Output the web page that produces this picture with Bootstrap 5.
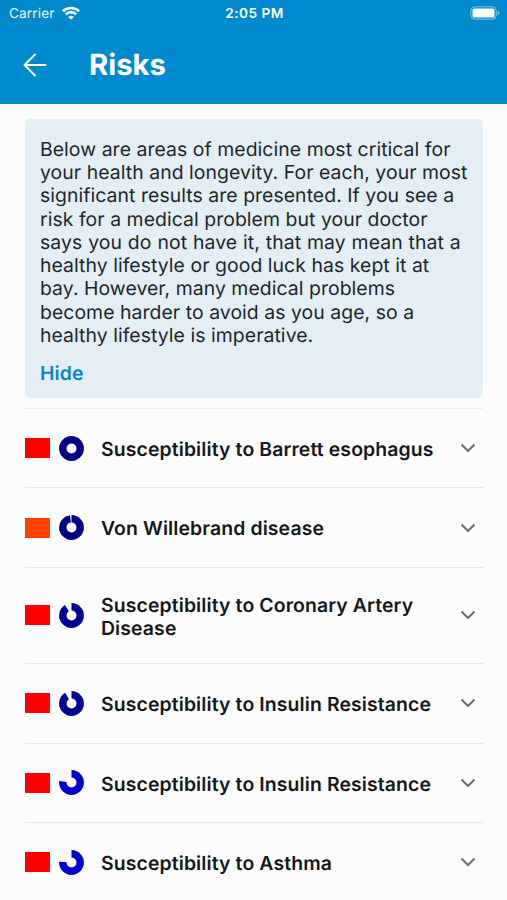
<!DOCTYPE html>
<html lang="en">
<head>
<meta charset="utf-8">
<meta name="viewport" content="width=device-width, initial-scale=1">
<title>Risks</title>
<link href="https://cdn.jsdelivr.net/npm/bootstrap@5.3.0/dist/css/bootstrap.min.css" rel="stylesheet">
<style>
body{background:#fbfbfb;color:#20272c;font-family:Inter,"Liberation Sans",sans-serif;height:900px;overflow:hidden;text-rendering:geometricPrecision}
.app-header{background:#008ace;height:103.5px}
.status{height:27px;font-size:13.6px;line-height:27px;padding:1px 7px 0 9px}
.status>*{flex:1 1 0}
.clock{font-weight:600;letter-spacing:.5px}
.carrier{letter-spacing:.15px;opacity:.93;padding-top:1px}
.status svg{margin-bottom:1.5px}
.title-row{height:76px;padding-left:23px}
.screen-title{font-size:29.3px;font-weight:700;line-height:36px;margin:0 0 0 42px;padding-top:2px}
.page{padding:15px 24.5px 0 25px}
.intro{background:#e3eef5;border-radius:5px;height:279.5px;padding:19.3px 15px 0;font-size:19.4px;letter-spacing:.06px;line-height:23.25px;white-space:nowrap}
.wide-line{word-spacing:.42px}
.hide-link{color:#0a86c8;font-weight:600;letter-spacing:.15px;margin-top:14.7px;display:block;text-decoration:none}
.risks{margin-top:10px;border-top:1px solid #eaeeef}
.risk{height:79.4px;border-bottom:1.5px solid #e3eaeb}
.risk.tall{height:96.4px}
.swatch{width:25px;height:20px;background:#f00;margin-right:9px}
.swatch.orange{background:#ff4200}
.risk-name{color:#15181a;font-size:19.4px;letter-spacing:.12px;font-weight:600;line-height:23.25px;margin-left:17px;padding-top:3px}
.chev{margin-right:7px}
</style>
</head>
<body>
<header class="app-header text-white">
  <div class="status d-flex align-items-center">
    <div class="d-flex align-items-center"><span class="carrier">Carrier</span>
      <svg width="18" height="14" style="margin-left:7px" viewBox="0 0 18 14" fill="none" stroke="#fff" stroke-width="2.6"><path d="M.9 5.2C5.3.9 12.7.9 17.1 5.2M3.8 8.4c2.8-2.8 7.6-2.8 10.4 0"/><path d="M9 13.7 6.2 10.9q2.8-2.4 5.6 0Z" fill="#fff" stroke="none"/></svg></div>
    <div class="clock text-center">2:05 PM</div>
    <div class="d-flex justify-content-end"><svg width="30" height="14" viewBox="0 0 30 14"><rect x=".8" y=".8" width="25.5" height="12.4" rx="4" fill="none" stroke="#fff" stroke-opacity=".5"/><rect x="2.5" y="2.5" width="22" height="9" rx="1.5" fill="#fff"/><path d="M27.6 4.8q3.4 2.2 0 4.4Z" fill="#fff" fill-opacity=".55"/></svg></div>
  </div>
  <div class="title-row d-flex align-items-center">
    <svg width="24" height="24" viewBox="0 0 24 24" fill="none" stroke="#fff" stroke-width="2" stroke-linecap="round" stroke-linejoin="round"><path d="M22.5 12H1.8M12 1.5 1.5 12 12 22.5"/></svg>
    <h1 class="screen-title">Risks</h1>
  </div>
</header>
<main class="page">
  <section class="intro"><p class="m-0">Below are areas of medicine most critical for<br>your health and longevity. For each, your most<br>significant results are presented. If you see a<br>risk for a medical problem but your doctor<br><span class="wide-line">says you do not have it, that may mean that a</span><br>healthy lifestyle or good luck has kept it at<br>bay. However, many medical problems<br>become harder to avoid as you age, so a<br>healthy lifestyle is imperative.</p>
    <a class="hide-link" href="#">Hide</a></section>
  <div class="risks">
    <div class="risk d-flex align-items-center"><span class="swatch"></span><svg width="25" height="25" viewBox="0 0 25 25"><circle cx="12.5" cy="12.5" r="8.7" fill="none" stroke="#000080" stroke-width="7.4"/></svg><span class="risk-name">Susceptibility to Barrett esophagus</span><svg class="chev ms-auto" width="16" height="10" viewBox="0 0 16 10" fill="none" stroke="#737373" stroke-width="2.2"><path d="m1.5 1.5 6.5 6.5 6.5-6.5"/></svg></div>
    <div class="risk d-flex align-items-center"><span class="swatch orange"></span><svg width="25" height="25" viewBox="0 0 25 25"><circle cx="12.5" cy="12.5" r="8.7" fill="none" stroke="#000084" stroke-width="7.4" pathLength="100" stroke-dasharray="98 2" transform="rotate(-90 12.5 12.5)"/></svg><span class="risk-name">Von Willebrand disease</span><svg class="chev ms-auto" width="16" height="10" viewBox="0 0 16 10" fill="none" stroke="#737373" stroke-width="2.2"><path d="m1.5 1.5 6.5 6.5 6.5-6.5"/></svg></div>
    <div class="risk tall d-flex align-items-center"><span class="swatch"></span><svg width="25" height="25" viewBox="0 0 25 25"><circle cx="12.5" cy="12.5" r="8.7" fill="none" stroke="#000096" stroke-width="7.4" pathLength="100" stroke-dasharray="91 9" transform="rotate(-90 12.5 12.5)"/></svg><span class="risk-name">Susceptibility to Coronary Artery<br>Disease</span><svg class="chev ms-auto" width="16" height="10" viewBox="0 0 16 10" fill="none" stroke="#737373" stroke-width="2.2"><path d="m1.5 1.5 6.5 6.5 6.5-6.5"/></svg></div>
    <div class="risk d-flex align-items-center"><span class="swatch"></span><svg width="25" height="25" viewBox="0 0 25 25"><circle cx="12.5" cy="12.5" r="8.7" fill="none" stroke="#000096" stroke-width="7.4" pathLength="100" stroke-dasharray="91.5 8.5" transform="rotate(-90 12.5 12.5)"/></svg><span class="risk-name">Susceptibility to Insulin Resistance</span><svg class="chev ms-auto" width="16" height="10" viewBox="0 0 16 10" fill="none" stroke="#737373" stroke-width="2.2"><path d="m1.5 1.5 6.5 6.5 6.5-6.5"/></svg></div>
    <div class="risk d-flex align-items-center"><span class="swatch"></span><svg width="25" height="25" viewBox="0 0 25 25"><circle cx="12.5" cy="12.5" r="8.7" fill="none" stroke="#0000c8" stroke-width="7.4" pathLength="100" stroke-dasharray="77 23" transform="rotate(-90 12.5 12.5)"/></svg><span class="risk-name">Susceptibility to Insulin Resistance</span><svg class="chev ms-auto" width="16" height="10" viewBox="0 0 16 10" fill="none" stroke="#737373" stroke-width="2.2"><path d="m1.5 1.5 6.5 6.5 6.5-6.5"/></svg></div>
    <div class="risk d-flex align-items-center"><span class="swatch"></span><svg width="25" height="25" viewBox="0 0 25 25"><circle cx="12.5" cy="12.5" r="8.7" fill="none" stroke="#0000cc" stroke-width="7.4" pathLength="100" stroke-dasharray="76 24" transform="rotate(-90 12.5 12.5)"/></svg><span class="risk-name">Susceptibility to Asthma</span><svg class="chev ms-auto" width="16" height="10" viewBox="0 0 16 10" fill="none" stroke="#737373" stroke-width="2.2"><path d="m1.5 1.5 6.5 6.5 6.5-6.5"/></svg></div>
  </div>
</main>
<script src="https://cdn.jsdelivr.net/npm/bootstrap@5.3.0/dist/js/bootstrap.bundle.min.js"></script>
</body>
</html>
